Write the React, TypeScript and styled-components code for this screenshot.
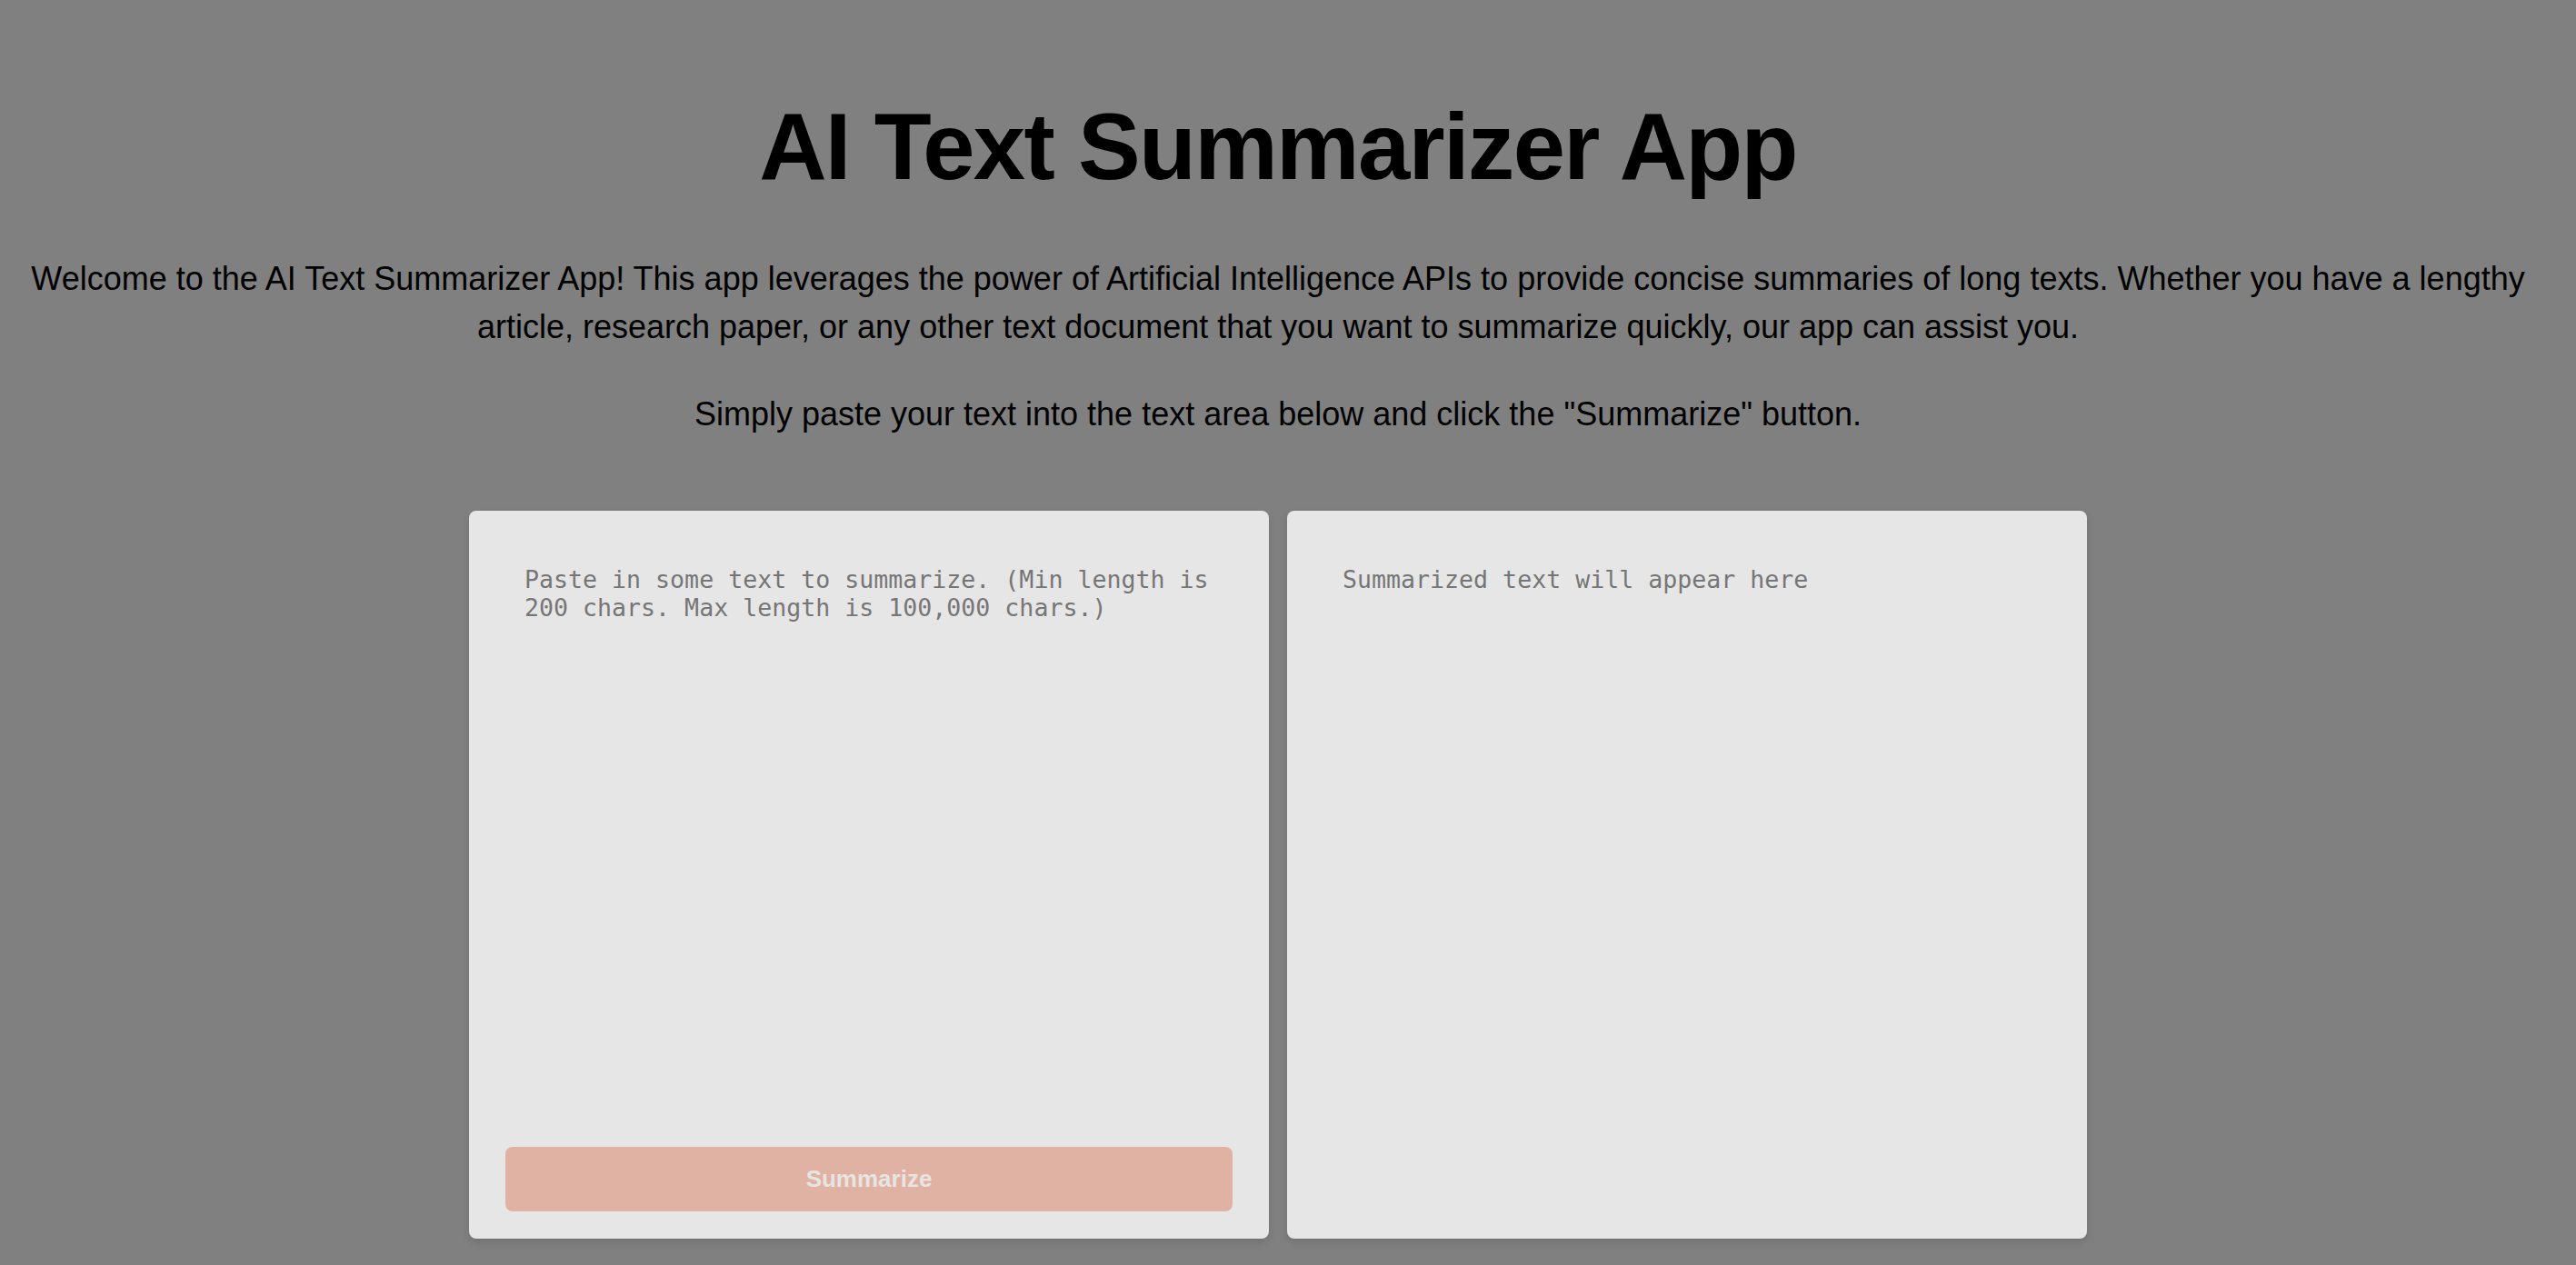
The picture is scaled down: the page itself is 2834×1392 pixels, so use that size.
import React from "react";
import styled, { createGlobalStyle } from "styled-components";

const GlobalStyle = createGlobalStyle`
  html, body {
    margin: 0;
    padding: 0;
    background: #808080;
  }
  body {
    font-family: "Liberation Sans", Helvetica, Arial, sans-serif;
    color: #000;
  }
  * { box-sizing: border-box; }
`;

const Page = styled.main`
  width: calc(100% - 22px);
  padding: 103px 20px 40px;
  display: flex;
  flex-direction: column;
  align-items: center;
`;

const Title = styled.h1`
  margin: 0;
  font-size: 103px;
  line-height: 118px;
  font-weight: 700;
  letter-spacing: -1.7px;
  text-align: center;
`;

const Intro = styled.p<{ $gap: number }>`
  margin: ${(p) => p.$gap}px 0 0;
  font-size: 36px;
  line-height: 53px;
  text-align: center;
`;

const Panels = styled.section`
  margin-top: 80px;
  display: flex;
  gap: 20px;
  justify-content: center;
`;

const Panel = styled.div`
  width: 880px;
  height: 801px;
  padding: 40px 40px 30px;
  background: #e6e6e6;
  border-radius: 8px;
  box-shadow: 0 4px 8px rgba(0, 0, 0, 0.12);
  display: flex;
  flex-direction: column;
`;

const monoFont = `"DejaVu Sans Mono", "Liberation Mono", monospace`;

const TextInput = styled.textarea`
  flex: 1;
  width: 100%;
  padding: 20px 21px;
  border: none;
  outline: none;
  resize: none;
  background: transparent;
  font-family: ${monoFont};
  font-size: 26.6px;
  color: #333;
  &::placeholder {
    color: #767676;
  }
`;

const Output = styled.div`
  flex: 1;
  padding: 20px 21px;
  font-family: ${monoFont};
  font-size: 26.6px;
  color: #767676;
`;

const SummarizeButton = styled.button`
  height: 71px;
  width: 100%;
  border: none;
  border-radius: 8px;
  background: #e0b2a4;
  color: #e8e4e2;
  font-family: "Liberation Sans", Helvetica, Arial, sans-serif;
  font-weight: 700;
  font-size: 26px;
  cursor: not-allowed;
`;

export default function App() {
  return (
    <>
      <GlobalStyle />
      <Page>
        <Title>AI Text Summarizer App</Title>
        <Intro $gap={59}>
          Welcome to the AI Text Summarizer App! This app leverages the power of
          Artificial Intelligence APIs to provide concise summaries of long
          texts. Whether you have a lengthy article, research paper, or any
          other text document that you want to summarize quickly, our app can
          assist you.
        </Intro>
        <Intro $gap={43}>
          Simply paste your text into the text area below and click the
          "Summarize" button.
        </Intro>
        <Panels>
          <Panel>
            <TextInput placeholder="Paste in some text to summarize. (Min length is 200 chars. Max length is 100,000 chars.)" />
            <SummarizeButton disabled>Summarize</SummarizeButton>
          </Panel>
          <Panel>
            <Output>Summarized text will appear here</Output>
          </Panel>
        </Panels>
      </Page>
    </>
  );
}
